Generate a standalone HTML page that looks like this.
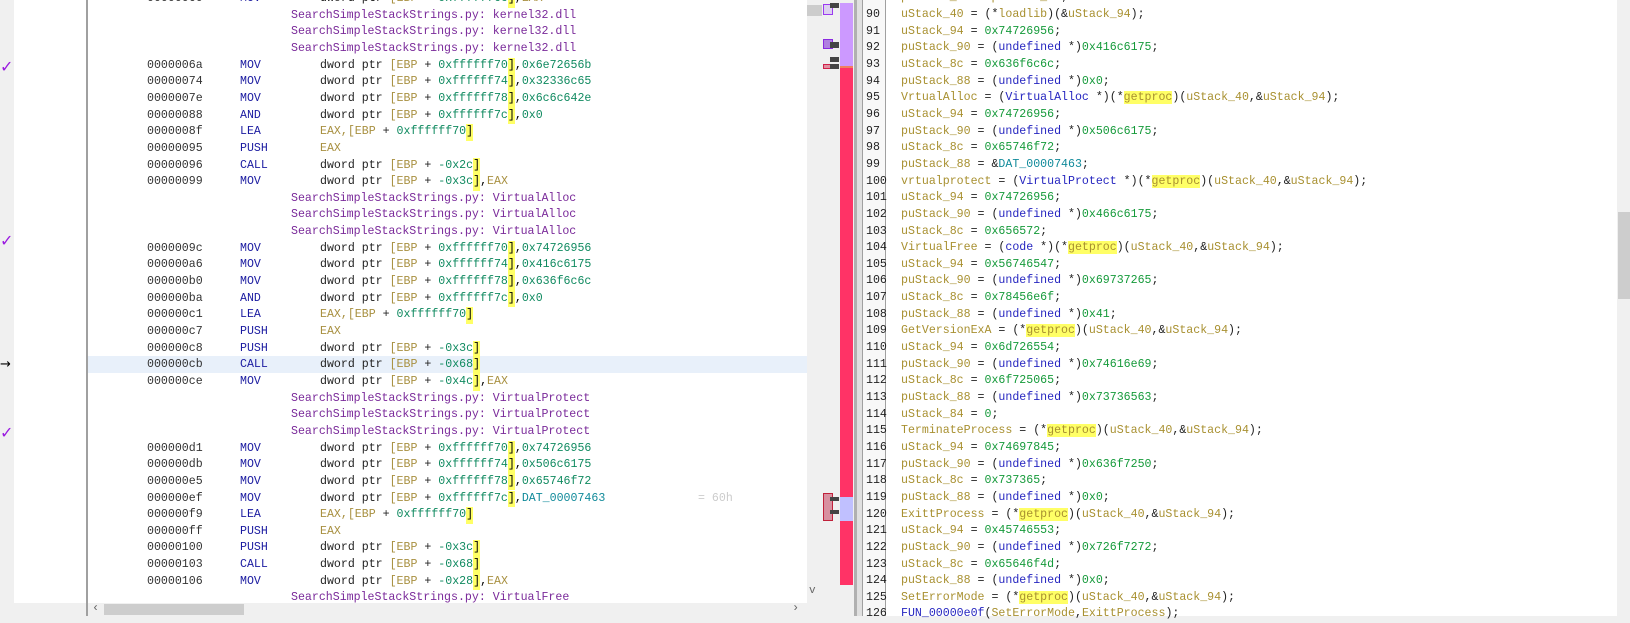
<!DOCTYPE html>
<html><head><meta charset="utf-8"><style>
*{margin:0;padding:0;box-sizing:border-box}
body{width:1630px;height:616px;overflow:hidden;background:#f0f0f0;position:relative;font-family:"Liberation Mono","Courier New",monospace;font-size:11.6px}
.abs{position:absolute}
.row{position:absolute;height:16.65px;line-height:16.65px;white-space:pre}
.ad{color:#333}
.mn{color:#1a1aa0}
.k{color:#222}
.r{color:#a89040}
.h{color:#108a60}
.y{background:#ffff66;display:inline-block;height:16.65px}
.c{color:#7a2a9a}
.v{color:#a89030}
.n{color:#159a3a}
.t{color:#2626c0}
.d{color:#108a9a}
.g{background:#ffff66;color:#a89030}
.p{color:#222}
</style></head><body>
<div class="abs" style="left:0;top:0;width:14px;height:616px;background:#f0f0f0"></div>
<div class="abs" style="left:14px;top:0;width:74px;height:603px;background:#fff"></div>
<div class="abs" style="left:86px;top:0;width:2px;height:616px;background:#a0a0a0"></div>
<div class="abs" style="left:88px;top:0;width:719px;height:603px;background:#fff"></div>
<div class="abs" style="left:88px;top:356px;width:719px;height:17px;background:#e8f0fa"></div>
<div class="abs" style="left:0;top:57px;color:#9a1ae0;font-size:16px;font-weight:bold;font-family:'DejaVu Sans',sans-serif">✓</div>
<div class="abs" style="left:0;top:231px;color:#9a1ae0;font-size:16px;font-weight:bold;font-family:'DejaVu Sans',sans-serif">✓</div>
<div class="abs" style="left:0;top:423px;color:#9a1ae0;font-size:16px;font-weight:bold;font-family:'DejaVu Sans',sans-serif">✓</div>
<div class="abs" style="left:0;top:357px;font-size:13px;font-family:'DejaVu Sans',sans-serif">→</div>
<div id="L"></div>
<div class="abs" style="left:88px;top:603px;width:719px;height:13px;background:#f0f0f0"></div>
<div class="abs" style="left:104px;top:604px;width:140px;height:11px;background:#cdcdcd"></div>
<div class="abs" style="left:92px;top:601px;color:#666;font-size:12px">‹</div>
<div class="abs" style="left:792px;top:601px;color:#666;font-size:12px">›</div>
<div class="abs" style="left:809px;top:585px;color:#666;font-size:11px">v</div>
<div class="abs" style="left:807px;top:5px;width:15px;height:11px;background:#ccc"></div>
<div class="abs" style="left:823px;top:4px;width:10px;height:11px;border:1px solid #9a3af0;background:#ddd0f0"></div>
<div class="abs" style="left:823px;top:39px;width:10px;height:10px;border:1px solid #8a2ae0;background:#b080e0"></div>
<div class="abs" style="left:823px;top:64px;width:10px;height:5px;border:1px solid #d0204a;background:#e090a0"></div>
<div class="abs" style="left:830px;top:3px;width:9px;height:5px;background:#444"></div>
<div class="abs" style="left:830px;top:42px;width:9px;height:6px;background:#444"></div>
<div class="abs" style="left:830px;top:57px;width:9px;height:5px;background:#444"></div>
<div class="abs" style="left:830px;top:64px;width:9px;height:5px;background:#444"></div>
<div class="abs" style="left:840px;top:3px;width:13px;height:63px;background:#cc99ff"></div>
<div class="abs" style="left:840px;top:66px;width:13px;height:2px;background:#f08060"></div>
<div class="abs" style="left:840px;top:68px;width:13px;height:517px;background:#ff3366"></div>
<div class="abs" style="left:823px;top:493px;width:10px;height:28px;border:1px solid #c0203a;background:#d890a0"></div>
<div class="abs" style="left:830px;top:497px;width:9px;height:4px;background:#444"></div>
<div class="abs" style="left:830px;top:510px;width:9px;height:4px;background:#444"></div>
<div class="abs" style="left:840px;top:497px;width:13px;height:24px;background:#c0c0ff"></div>
<div class="abs" style="left:854px;top:0;width:3px;height:616px;background:#b0b0b0"></div>
<div class="abs" style="left:857px;top:0;width:6px;height:616px;background:#e0e0e0"></div>
<div class="abs" style="left:862px;top:0;width:1px;height:616px;background:#a0a0a0"></div>
<div class="abs" style="left:863px;top:0;width:22px;height:616px;background:#f8f8f8"></div>
<div class="abs" style="left:885px;top:0;width:1px;height:616px;background:#a0a0a0"></div>
<div class="abs" style="left:886px;top:0;width:731px;height:616px;background:#fff"></div>
<div class="abs" style="left:1617px;top:0;width:13px;height:616px;background:#f0f0f0"></div>
<div class="abs" style="left:1618px;top:212px;width:12px;height:87px;background:#cdcdcd"></div>
<div id="R"></div>
<script>
function op(reg,off,rest){return '<span class="k">dword ptr </span><span class="r">[EBP</span><span class="k"> + </span><span class="h">'+off+'</span><span class="y">]</span>'+(rest||'');}
var L=[
['00000060','MOV',op('','0xffffff6c',',<span class="r">EAX</span>')],
['c','SearchSimpleStackStrings.py: kernel32.dll'],
['c','SearchSimpleStackStrings.py: kernel32.dll'],
['c','SearchSimpleStackStrings.py: kernel32.dll'],
['0000006a','MOV',op('','0xffffff70',',<span class="h">0x6e72656b</span>')],
['00000074','MOV',op('','0xffffff74',',<span class="h">0x32336c65</span>')],
['0000007e','MOV',op('','0xffffff78',',<span class="h">0x6c6c642e</span>')],
['00000088','AND',op('','0xffffff7c',',<span class="h">0x0</span>')],
['0000008f','LEA','<span class="r">EAX,[EBP</span><span class="k"> + </span><span class="h">0xffffff70</span><span class="y">]</span>'],
['00000095','PUSH','<span class="r">EAX</span>'],
['00000096','CALL',op('','-0x2c')],
['00000099','MOV',op('','-0x3c',',<span class="r">EAX</span>')],
['c','SearchSimpleStackStrings.py: VirtualAlloc'],
['c','SearchSimpleStackStrings.py: VirtualAlloc'],
['c','SearchSimpleStackStrings.py: VirtualAlloc'],
['0000009c','MOV',op('','0xffffff70',',<span class="h">0x74726956</span>')],
['000000a6','MOV',op('','0xffffff74',',<span class="h">0x416c6175</span>')],
['000000b0','MOV',op('','0xffffff78',',<span class="h">0x636f6c6c</span>')],
['000000ba','AND',op('','0xffffff7c',',<span class="h">0x0</span>')],
['000000c1','LEA','<span class="r">EAX,[EBP</span><span class="k"> + </span><span class="h">0xffffff70</span><span class="y">]</span>'],
['000000c7','PUSH','<span class="r">EAX</span>'],
['000000c8','PUSH',op('','-0x3c')],
['000000cb','CALL',op('','-0x68')],
['000000ce','MOV',op('','-0x4c',',<span class="r">EAX</span>')],
['c','SearchSimpleStackStrings.py: VirtualProtect'],
['c','SearchSimpleStackStrings.py: VirtualProtect'],
['c','SearchSimpleStackStrings.py: VirtualProtect'],
['000000d1','MOV',op('','0xffffff70',',<span class="h">0x74726956</span>')],
['000000db','MOV',op('','0xffffff74',',<span class="h">0x506c6175</span>')],
['000000e5','MOV',op('','0xffffff78',',<span class="h">0x65746f72</span>')],
['000000ef','MOV',op('','0xffffff7c',',<span class="d">DAT_00007463</span>')],
['000000f9','LEA','<span class="r">EAX,[EBP</span><span class="k"> + </span><span class="h">0xffffff70</span><span class="y">]</span>'],
['000000ff','PUSH','<span class="r">EAX</span>'],
['00000100','PUSH',op('','-0x3c')],
['00000103','CALL',op('','-0x68')],
['00000106','MOV',op('','-0x28',',<span class="r">EAX</span>')],
['c','SearchSimpleStackStrings.py: VirtualFree']
];
var h='';
L.forEach(function(e,i){var t=-9+i*16.65;
if(e[0]=='c'){h+='<div class="row c" style="left:291px;top:'+t+'px">'+e[1]+'</div>';}
else{h+='<div class="row ad" style="left:147px;top:'+t+'px">'+e[0]+'</div><div class="row mn" style="left:240px;top:'+t+'px">'+e[1]+'</div><div class="row" style="left:320px;top:'+t+'px">'+e[2]+'</div>';}
});
h+='<div class="row" style="left:698px;top:'+(-9+30*16.65)+'px;color:#ccc">= 60h</div>';
document.getElementById('L').innerHTML=h;
function a(v,n){return '<span class="v">'+v+'</span><span class="p"> = </span><span class="n">'+n+'</span><span class="p">;</span>';}
function u(v,n){return '<span class="v">'+v+'</span><span class="p"> = (</span><span class="t">undefined</span><span class="p"> *)</span><span class="n">'+n+'</span><span class="p">;</span>';}
function g(v,cast){return '<span class="v">'+v+'</span><span class="p"> = '+(cast?'(<span class="t">'+cast+'</span> *)':'')+'(*</span><span class="g">getproc</span><span class="p">)(</span><span class="v">uStack_40</span><span class="p">,&amp;</span><span class="v">uStack_94</span><span class="p">);</span>';}
var R=[
['89','<span class="v">puStack_88</span><span class="p"> = </span><span class="v">puStack_88</span><span class="p">;</span>'],
['90','<span class="v">uStack_40</span><span class="p"> = (*</span><span class="v">loadlib</span><span class="p">)(&amp;</span><span class="v">uStack_94</span><span class="p">);</span>'],
['91',a('uStack_94','0x74726956')],
['92',u('puStack_90','0x416c6175')],
['93',a('uStack_8c','0x636f6c6c')],
['94',u('puStack_88','0x0')],
['95',g('VrtualAlloc','VirtualAlloc')],
['96',a('uStack_94','0x74726956')],
['97',u('puStack_90','0x506c6175')],
['98',a('uStack_8c','0x65746f72')],
['99','<span class="v">puStack_88</span><span class="p"> = &amp;</span><span class="d">DAT_00007463</span><span class="p">;</span>'],
['100',g('vrtualprotect','VirtualProtect')],
['101',a('uStack_94','0x74726956')],
['102',u('puStack_90','0x466c6175')],
['103',a('uStack_8c','0x656572')],
['104',g('VirtualFree','code')],
['105',a('uStack_94','0x56746547')],
['106',u('puStack_90','0x69737265')],
['107',a('uStack_8c','0x78456e6f')],
['108',u('puStack_88','0x41')],
['109',g('GetVersionExA')],
['110',a('uStack_94','0x6d726554')],
['111',u('puStack_90','0x74616e69')],
['112',a('uStack_8c','0x6f725065')],
['113',u('puStack_88','0x73736563')],
['114',a('uStack_84','0')],
['115',g('TerminateProcess')],
['116',a('uStack_94','0x74697845')],
['117',u('puStack_90','0x636f7250')],
['118',a('uStack_8c','0x737365')],
['119',u('puStack_88','0x0')],
['120',g('ExittProcess')],
['121',a('uStack_94','0x45746553')],
['122',u('puStack_90','0x726f7272')],
['123',a('uStack_8c','0x65646f4d')],
['124',u('puStack_88','0x0')],
['125',g('SetErrorMode')],
['126','<span class="t">FUN_00000e0f</span><span class="p">(</span><span class="v">SetErrorMode</span><span class="p">,</span><span class="v">ExittProcess</span><span class="p">);</span>']
];
h='';
R.forEach(function(e,i){var t=-9.6+i*16.65;
h+='<div class="row" style="left:866px;top:'+t+'px;color:#222">'+e[0]+'</div><div class="row" style="left:901px;top:'+t+'px">'+e[1]+'</div>';});
document.getElementById('R').innerHTML=h;
</script>
</body></html>
